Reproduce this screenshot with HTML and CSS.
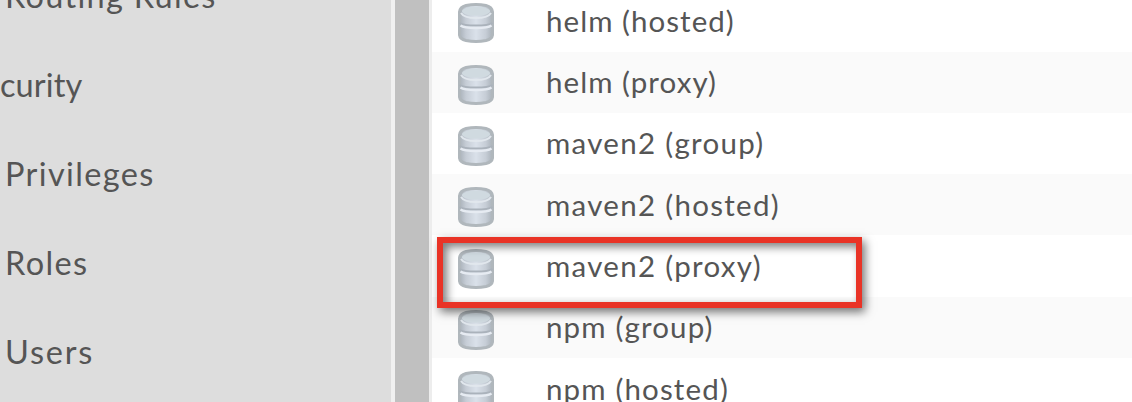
FILE: index.html
```
<!DOCTYPE html>
<html lang="en">
<head>
<meta charset="utf-8">
<title>Repositories</title>
<link rel="stylesheet" href="styles.css">
</head>
<body>
<svg class="defs" width="0" height="0">
  <defs>
    <linearGradient id="side" x1="0" x2="1" y1="0" y2="0">
      <stop offset="0" stop-color="#a9b1b9"/><stop offset=".2" stop-color="#c6cdd6"/>
      <stop offset=".5" stop-color="#dae1ea"/><stop offset=".8" stop-color="#c6cdd6"/>
      <stop offset="1" stop-color="#a9b1b9"/>
    </linearGradient>
    <symbol id="db" viewBox="0 0 38 42">
      <path d="M2.5 10Q3 5 9 3.5Q19 1.5 29 3.5Q35 5 35.5 10V33Q35 37 29 38.5Q19 40.5 9 38.5Q3 37 2.5 33Z" fill="url(#side)" stroke="#b0b7bc" stroke-width="3"/>
      <ellipse cx="19" cy="9.2" rx="14" ry="4.6" fill="#d0dae0"/>
      <path d="M4 11Q7 16 19 16T34 11" fill="none" stroke="#e1e7ed" stroke-width="2"/>
      <path d="M2.5 21Q6 23.5 19 23.5T35.5 21" fill="none" stroke="#aab2bb" stroke-width="1.8"/>
      <path d="M3.5 23.5Q7 26 19 26T34.5 23.5" fill="none" stroke="#e6ebf2" stroke-width="2.4"/>
    </symbol>
  </defs>
</svg>
<div class="app">
  <nav class="sidebar">
    <a class="item routing">Routing Rules</a>
    <a class="item section">curity</a>
    <a class="item">Privileges</a>
    <a class="item">Roles</a>
    <a class="item users">Users</a>
  </nav>
  <div class="splitter"></div>
  <main class="list">
    <div class="row helm"><svg class="icon"><use href="#db"/></svg><span>helm (hosted)</span></div>
    <div class="row helm"><svg class="icon"><use href="#db"/></svg><span>helm (proxy)</span></div>
    <div class="row maven"><svg class="icon"><use href="#db"/></svg><span>maven2 (group)</span></div>
    <div class="row maven"><svg class="icon"><use href="#db"/></svg><span>maven2 (hosted)</span></div>
    <div class="row maven"><svg class="icon"><use href="#db"/></svg><span>maven2 (proxy)</span></div>
    <div class="row npm"><svg class="icon"><use href="#db"/></svg><span>npm (group)</span></div>
    <div class="row npm"><svg class="icon"><use href="#db"/></svg><span>npm (hosted)</span></div>
  </main>
  <div class="highlight"></div>
</div>
</body>
</html>
```
FILE: styles.css
```
* { box-sizing: border-box; }
body { margin: 0; overflow: hidden; font-family: Lato, "Liberation Sans", sans-serif; color: #555; background: #fff; }
.defs { position: absolute; }
.app { position: relative; display: flex; width: 1132px; height: 402px; overflow: hidden; }
.sidebar { flex: none; width: 391px; height: 460px; margin-top: -49px; background: #ddd; }
.item { display: flex; align-items: center; height: 89px; padding-left: 5px; font-size: 32.5px; line-height: 40px; letter-spacing: 1.35px; white-space: nowrap; }
.routing { letter-spacing: 1.25px; }
.section { padding-left: 0; letter-spacing: .1px; }
.users { letter-spacing: 1.8px; }
.splitter { flex: none; width: 41px; background: #c0c0c0; border-left: 4px solid #f0f0f0; border-right: 3px solid #ededed; }
.list { flex: 1; height: 430px; margin-top: -9.8px; }
.row { display: flex; align-items: center; height: 61.3px; padding-left: 25px; font-size: 29.5px; line-height: 36px; white-space: nowrap; }
.row:nth-child(even) { background: #fafafa; }
.helm { letter-spacing: 1.05px; }
.maven { letter-spacing: 1.3px; }
.npm { letter-spacing: 1.15px; }
.icon { flex: none; width: 38px; height: 42px; margin: 5px 51px 0 0; }
.highlight { position: absolute; left: 437px; top: 237px; width: 425px; height: 71px; border: 6px solid #e93326; box-shadow: 3px 4px 9px rgba(0,0,0,.55), inset 4px 4px 9px rgba(0,0,0,.5); }
```
